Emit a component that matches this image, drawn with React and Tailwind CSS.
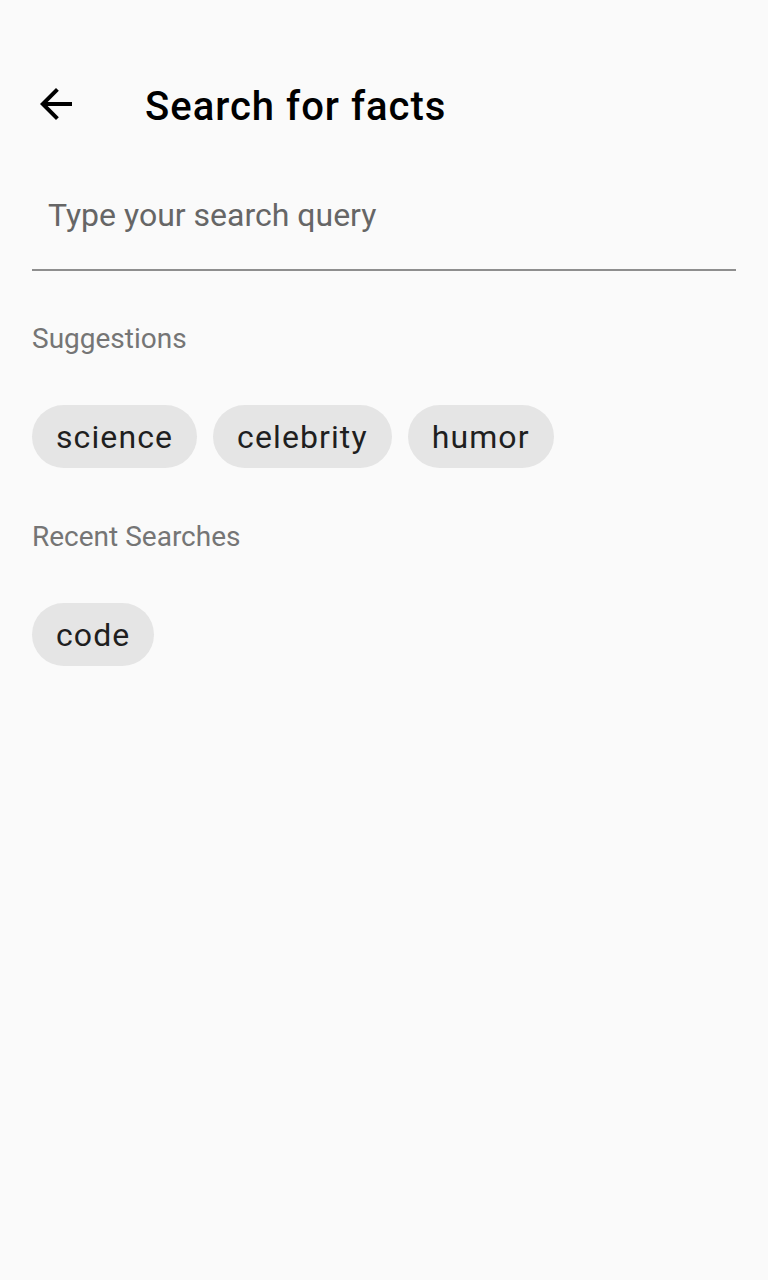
export default function App() {
  const font = { fontFamily: 'Roboto, "Noto Sans", sans-serif' };
  const chip =
    'flex h-[63px] items-center rounded-full bg-[#e5e5e5] px-6 text-[32px] tracking-[1.1px] text-[#1f1f1f]';
  return (
    <div className="min-h-[1280px] w-[768px] bg-[#fafafa] flex flex-col" style={font}>
      <div className="mt-[64px] flex h-[80px] items-center pl-8">
        <svg width="48" height="48" viewBox="0 0 24 24" className="shrink-0">
          <path d="M20 11H7.83l5.59-5.59L12 4l-8 8 8 8 1.41-1.41L7.83 13H20v-2z" fill="#000" />
        </svg>
        <div className="ml-[65px] mt-[5px] text-[40px] leading-[48px] font-medium text-black tracking-[1px]">Search for facts</div>
      </div>
      <div className="mx-8 mt-[49px] border-b-2 border-[#8e8e8e] pb-[32px] pl-4">
        <div className="text-[32px] leading-[44px] text-[#666666]">Type your search query</div>
      </div>
      <div className="mt-[52px] px-8 text-[28px] leading-[32px] text-[#757575]">Suggestions</div>
      <div className="mt-[50px] flex gap-4 px-8">
        {['science', 'celebrity', 'humor'].map((t) => (
          <div key={t} className={chip}>{t}</div>
        ))}
      </div>
      <div className="mt-[53px] px-8 text-[28px] leading-[32px] text-[#757575]">Recent Searches</div>
      <div className="mt-[50px] flex gap-4 px-8">
        {['code'].map((t) => (
          <div key={t} className={chip}>{t}</div>
        ))}
      </div>
    </div>
  );
}
